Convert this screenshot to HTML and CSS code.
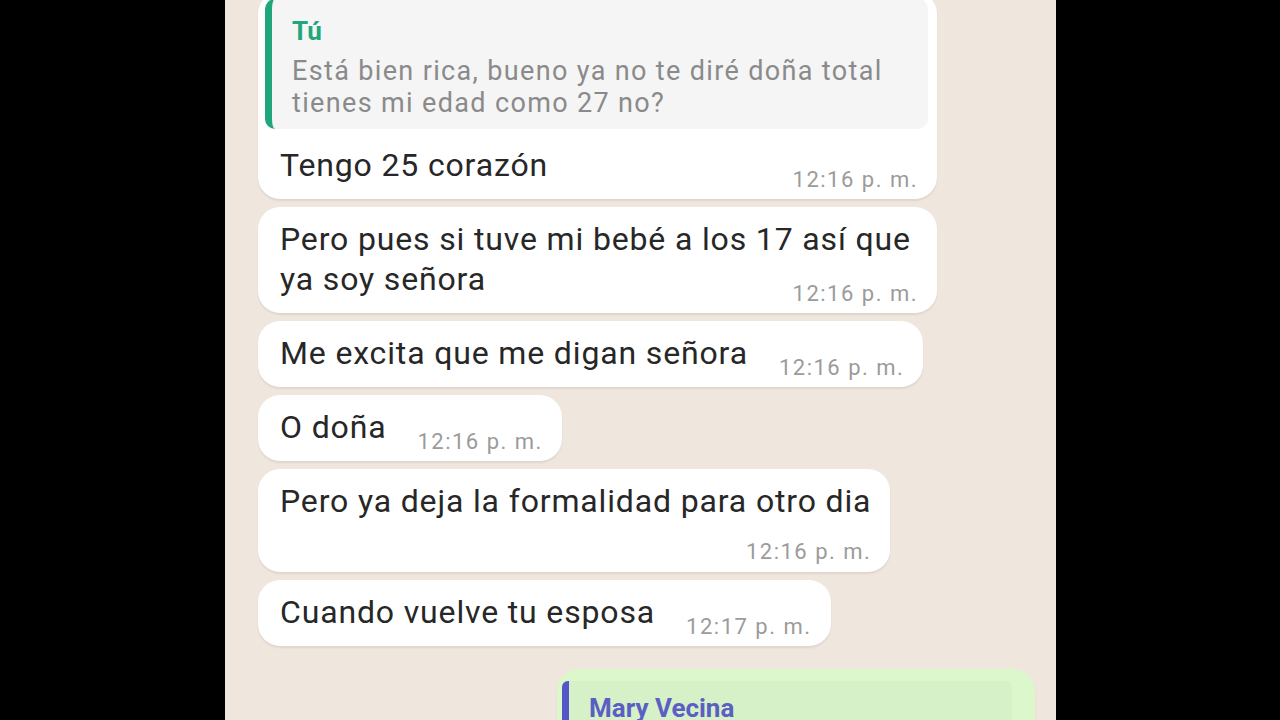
FILE: index.html
```html
<!DOCTYPE html>
<html lang="es">
<head>
    <meta charset="UTF-8">
    <meta name="viewport" content="width=device-width, initial-scale=1.0">
    <title>Chat</title>
    <link rel="stylesheet" href="styles.css">
</head>
<body>
    <div class="chat">
        <div class="msg reply">
            <div class="quote">
                <div class="quote-name">Tú</div>
                <div class="quote-text">Está bien rica, bueno ya no te diré doña total tienes mi edad como 27 no?</div>
            </div>
            <div class="body">Tengo 25 corazón<span class="time">12:16 p. m.</span></div>
        </div>

        <div class="msg">
            <div class="body">Pero pues si tuve mi bebé a los 17 así que ya soy señora<span class="time">12:16 p. m.</span></div>
        </div>

        <div class="msg">
            <div class="body">Me excita que me digan señora<span class="time">12:16 p. m.</span></div>
        </div>

        <div class="msg">
            <div class="body">O doña<span class="time">12:16 p. m.</span></div>
        </div>

        <div class="msg stacked">
            <div class="body">Pero ya deja la formalidad para otro dia</div>
            <div class="time">12:16 p. m.</div>
        </div>

        <div class="msg">
            <div class="body">Cuando vuelve tu esposa<span class="time">12:17 p. m.</span></div>
        </div>

        <div class="msg out">
            <div class="quote">
                <div class="quote-name">Mary Vecina</div>
                <div class="quote-text">Cuando vuelve tu esposa</div>
            </div>
        </div>
    </div>
</body>
</html>
```

FILE: styles.css
```css
/* Page */
body {
    margin: 0;
    background: #000;
    height: 720px;
    overflow: hidden;
    font-family: Roboto, "Noto Sans", sans-serif;
}

/* Chat panel */
.chat {
    width: 831px;
    height: 720px;
    margin: 0 auto 0 225px;
    box-sizing: border-box;
    padding: 0 21px 0 33px;
    background: #efe6dd;
    display: flex;
    flex-direction: column;
    align-items: flex-start;
    gap: 8px;
    overflow: hidden;
}

/* Bubbles */
.msg {
    display: flow-root;
    max-width: 679px;
    box-sizing: border-box;
    padding: 12px 19px 14px 22px;
    background: #fff;
    border-radius: 22px;
    box-shadow: 0 2px 2px rgba(0, 0, 0, 0.07);
    color: #272727;
}

.msg .body {
    font-size: 32px;
    line-height: 40px;
    letter-spacing: 0.85px;
}

.time {
    float: right;
    margin: 24px 0 -6px 31px;
    font-size: 22px;
    line-height: 22px;
    letter-spacing: 1.5px;
    color: #9b9b9b;
}

.msg.stacked .time {
    float: none;
    display: block;
    text-align: right;
    margin: 20px 0 -5px;
}

/* Bubble with quoted message */
.msg.reply {
    margin-top: -8px;
    width: 679px;
    padding: 7px 9px 14px 7px;
}

.msg.reply .body {
    display: flow-root;
    margin-top: 16px;
    padding: 0 10px 0 15px;
}

.quote {
    padding: 14px 20px 10px 20px;
    background: #f5f5f6;
    border-left: 7px solid #1fa67c;
    border-radius: 10px;
}

.quote-name {
    font-size: 26px;
    line-height: 36px;
    font-weight: bold;
    color: #22a67b;
}

.quote-text {
    margin-top: 6px;
    font-size: 27px;
    line-height: 32px;
    letter-spacing: 1.35px;
    color: #8a8a8a;
}

/* Outgoing bubble */
.msg.out {
    align-self: flex-end;
    width: 478px;
    margin-top: 15px;
    padding: 12px 23px 14px 5px;
    background: #dcf7cb;
}

.msg.out .quote {
    padding-top: 9px;
    background: #d6f1c7;
    border-left-color: #5355c9;
    border-radius: 6px;
}

.msg.out .quote-name {
    color: #5b5fc4;
}
```
